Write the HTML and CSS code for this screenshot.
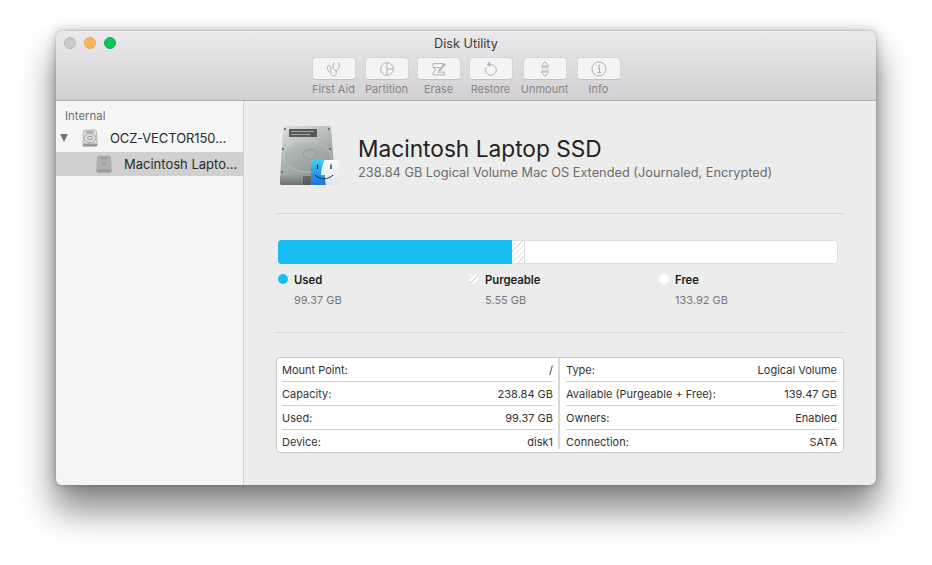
FILE: index.html
```html
<!DOCTYPE html>
<html lang="en">
<head>
<meta charset="utf-8">
<title>Disk Utility</title>
<link rel="stylesheet" href="styles.css">
</head>
<body>
<svg class="defs" width="0" height="0" aria-hidden="true">
  <defs>
    <linearGradient id="hddBody" x1="0.2" y1="0" x2="0.7" y2="1">
      <stop offset="0" stop-color="#d6dada"/><stop offset="0.55" stop-color="#a6adad"/><stop offset="1" stop-color="#858b8b"/>
    </linearGradient>
    <linearGradient id="hddPlate" x1="0" y1="0" x2="0.6" y2="1">
      <stop offset="0" stop-color="#bcc2c2"/><stop offset="1" stop-color="#959c9c"/>
    </linearGradient>
    <linearGradient id="hddFoot" x1="0" y1="0" x2="0" y2="1">
      <stop offset="0" stop-color="#9aa0a0"/><stop offset="1" stop-color="#6b7070"/>
    </linearGradient>
    <linearGradient id="finderBlue" x1="0" y1="0" x2="0" y2="1">
      <stop offset="0" stop-color="#3fcbf9"/><stop offset="1" stop-color="#1a72e0"/>
    </linearGradient>
    <linearGradient id="finderPale" x1="0" y1="0" x2="0" y2="1">
      <stop offset="0" stop-color="#f8fafb"/><stop offset="1" stop-color="#dfe7ec"/>
    </linearGradient>
    <symbol id="mini" viewBox="0 0 18 18">
      <path d="M3.500 1h11l1 1 .8 13v1.500l-1 1H2.700l-1-1V15l.8-13z" fill="currentColor" stroke="#a3a3a3" stroke-width=".7"/>
      <rect x="5" y="2.300" width="8" height="1.400" fill="#9a9a9a"/>
      <ellipse cx="9" cy="9" rx="5.800" ry="4.600" fill="none" stroke="#a4a4a4" stroke-width=".9"/>
      <ellipse cx="9" cy="9" rx="2.400" ry="1.700" fill="none" stroke="#979797" stroke-width=".9"/>
      <rect x="2.200" y="14.500" width="13.600" height="2.500" rx=".6" fill="#9b9b9b"/>
    </symbol>
  </defs>
</svg>
<main class="window">
  <header class="titlebar">
    <div class="lights">
      <span class="light grey"></span><span class="light amber"></span><span class="light green"></span>
    </div>
    <h1 class="title">Disk Utility</h1>
    <div class="tools">
      <div class="tool t1"><div class="btn"><svg viewBox="0 0 20 20"><path d="M10.500 3.500H9.500c-1 3-.5 6 1 7.500 1 1 2.700 1 3.700 0 1.500-1.500 2.300-4.500 1.300-7.500h-1.200M12.500 11.700V14c0 2.500-1.200 3.800-3 3.800s-3-1.300-3-3.300V8c0-1.300-.8-2-1.800-2s-2 .7-2 2c0 2.300.8 4.300 2 5.500" fill="none" stroke="#b0aeb0" stroke-width="1.100"/></svg></div><span>First Aid</span></div>
      <div class="tool t2"><div class="btn"><svg viewBox="0 0 20 20"><circle cx="10" cy="10" r="7" fill="none" stroke="#b0aeb0" stroke-width="1.100"/><path d="M10 3v14M10 10h7" fill="none" stroke="#b0aeb0" stroke-width="1.100"/></svg></div><span>Partition</span></div>
      <div class="tool t3"><div class="btn"><svg viewBox="0 0 20 20"><path d="M3.500 4h11v1.500M3.500 4v4.500h8M3.500 8.500l3 2.500-3 2.500v3h12.500v-3H8" fill="none" stroke="#b0aeb0" stroke-width="1.100"/><path d="M9.500 11l6.500-7.500 1.700 1.300-6.500 7.500-2.200.5z" fill="#b0aeb0"/></svg></div><span>Erase</span></div>
      <div class="tool t4"><div class="btn"><svg viewBox="0 0 20 20"><path d="M8.500 5.200a6 6 0 1 1-4 3.300" fill="none" stroke="#b0aeb0" stroke-width="1.100"/><path d="M9 1.800v6l-3.800-3z" fill="#b0aeb0"/></svg></div><span>Restore</span></div>
      <div class="tool t5"><div class="btn"><svg viewBox="0 0 20 20"><path d="M10 1.800l4 5h-8zM10 18.200l4-5h-8z" fill="none" stroke="#b0aeb0" stroke-width="1.100"/><path d="M6 8.600h8M6 11.400h8" stroke="#b0aeb0" stroke-width=".8"/></svg></div><span>Unmount</span></div>
      <div class="tool t6"><div class="btn"><svg viewBox="0 0 20 20"><circle cx="10" cy="10" r="7.800" fill="none" stroke="#b0aeb0" stroke-width="1.100"/><path d="M8.800 9h1.700v4.800M8.300 14h4" fill="none" stroke="#b0aeb0" stroke-width="1.200"/><circle cx="10" cy="6.400" r="1.100" fill="#b0aeb0"/></svg></div><span>Info</span></div>
    </div>
  </header>
  <div class="content">
    <aside class="sidebar">
      <div class="group">Internal</div>
      <div class="row disk"><span class="tri"></span><svg class="mini light-mini"><use href="#mini"/></svg><span>OCZ-VECTOR150...</span></div>
      <div class="row volume selected"><svg class="mini dark-mini"><use href="#mini"/></svg><span>Macintosh Lapto...</span></div>
    </aside>
    <section class="detail">
      <div class="head">
        <svg class="hdd" viewBox="0 0 60 60">
          <path d="M6 0h44a2 2 0 0 1 2 2l4 50v5a2 2 0 0 1-2 2H3a2 2 0 0 1-2-2v-5L4 2a2 2 0 0 1 2-2z" fill="url(#hddBody)"/>
          <ellipse cx="29" cy="31" rx="24" ry="15" fill="url(#hddPlate)" stroke="#c2c7c7" stroke-width=".7"/>
          <ellipse cx="31" cy="28" rx="7" ry="5" fill="#a7adad" stroke="#8c9292" stroke-width=".6"/>
          <rect x="10" y="3" width="28" height="8" rx=".5" fill="#565959"/>
          <path d="M12 5.500h23M12 8.500h19" stroke="#a5a8a8" stroke-width="1"/>
          <circle cx="6" cy="3" r="1.100" fill="#5f6363"/><circle cx="50" cy="3" r="1.100" fill="#5f6363"/>
          <circle cx="4" cy="23" r="1.100" fill="#5f6363"/><circle cx="51" cy="23" r="1.100" fill="#5f6363"/>
          <circle cx="3" cy="46" r="1.100" fill="#5f6363"/>
          <path d="M2 49h36v10H3a2 2 0 0 1-2-2v-5z" fill="url(#hddFoot)"/>
          <path d="M25 50v9M27 50v9M29 50v9M31 50v9" stroke="#3a3d3d" stroke-width="1"/>
          <rect x="32" y="34" width="28" height="25" rx="2.500" fill="url(#finderPale)"/>
          <path d="M34.500 34h11c-2 5-3.300 10-3.500 15 1.300.2 2.500.2 3.800.1.100 3.500.5 6.500 1 9.900h-12.300a2.500 2.500 0 0 1-2.500-2.500v-20a2.500 2.500 0 0 1 2.500-2.500z" fill="url(#finderBlue)"/>
          <path d="M38.500 38.500v4.500M52 38.500v4.500" stroke="#1d2b3d" stroke-width="1.300"/>
          <path d="M36 49c5 5 13 5 18 0" fill="none" stroke="#1d2b3d" stroke-width="1"/>
        </svg>
        <div class="head-text">
          <h2>Macintosh Laptop SSD</h2>
          <p>238.84 GB Logical Volume Mac OS Extended (Journaled, Encrypted)</p>
        </div>
      </div>
      <div class="usage">
        <div class="bar"><div class="used"></div><div class="purge"></div></div>
        <div class="legend">
          <div class="item i1"><span class="dot d-used"></span><div><b>Used</b><small>99.37 GB</small></div></div>
          <div class="item i2"><span class="dot d-purge"></span><div><b>Purgeable</b><small>5.55 GB</small></div></div>
          <div class="item i3"><span class="dot d-free"></span><div><b>Free</b><small>133.92 GB</small></div></div>
        </div>
      </div>
      <div class="info">
        <div class="col">
          <div class="kv"><span>Mount Point:</span><span>/</span></div>
          <div class="kv"><span>Capacity:</span><span>238.84 GB</span></div>
          <div class="kv"><span>Used:</span><span>99.37 GB</span></div>
          <div class="kv"><span>Device:</span><span>disk1</span></div>
        </div>
        <div class="col">
          <div class="kv"><span>Type:</span><span>Logical Volume</span></div>
          <div class="kv"><span>Available (Purgeable + Free):</span><span>139.47 GB</span></div>
          <div class="kv"><span>Owners:</span><span>Enabled</span></div>
          <div class="kv"><span>Connection:</span><span>SATA</span></div>
        </div>
      </div>
    </section>
  </div>
</main>
</body>
</html>
```

FILE: styles.css
```css
* { box-sizing: border-box; }
html, body { margin: 0; height: 100%; }
body {
  background: #fff;
  padding: 31px 56px 0;
  font-family: Inter, "Liberation Sans", sans-serif;
  overflow: hidden;
}
.defs { position: absolute; }
.window {
  width: 820px;
  height: 454px;
  border-radius: 6px;
  overflow: hidden;
  background: #ececec;
  box-shadow: 0 24px 34px 2px rgba(0,0,0,.46), 0 0 12px rgba(0,0,0,.28), 0 0 1px rgba(0,0,0,.5);
  display: flex;
  flex-direction: column;
}
.titlebar {
  height: 70px;
  flex: none;
  background: linear-gradient(#ebe9eb, #d2d0d2);
  border-bottom: 1px solid #b2b0b2;
  position: relative;
  display: flex;
  flex-direction: column;
  align-items: center;
}
.lights { position: absolute; left: 8px; top: 6px; display: flex; gap: 8px; }
.light { width: 12px; height: 12px; border-radius: 50%; }
.grey { background: #cbc9cb; border: 1px solid #b8b6b8; }
.amber { background: #f7b55c; border: 1px solid #e9a74f; }
.green { background: #0cc35c; border: 1px solid #10b354; }
.title { margin: 5px 0 0; font-size: 12.700px; font-weight: 400; line-height: 15px; color: #3b3b3b; }
.tools { display: flex; margin-top: 6px; }
.tool { display: flex; flex-direction: column; align-items: center; width: 44px; margin-left: 8px; }
.t1 { margin-left: 0; }
.t2 { margin-left: 9px; }
.t5, .t6 { margin-left: 10px; }
.btn {
  width: 44px; height: 23px;
  border-radius: 4px;
  background: #f5f4f5;
  border: 1px solid #d5d3d5;
  border-bottom-color: #c3c1c3;
  display: flex; align-items: center; justify-content: center;
}
.btn svg { width: 18px; height: 18px; }
.tool span { font-size: 11px; line-height: 14px; margin-top: 2px; color: #878587; white-space: nowrap; }
.content { flex: 1; display: flex; min-height: 0; }
.sidebar {
  width: 188px;
  flex: none;
  background: #f5f5f5;
  border-right: 1px solid #d2d2d2;
  padding-top: 9px;
  font-size: 13px;
  color: #2b2b2b;
}
.group { font-size: 11.400px; line-height: 13px; color: #6f6f6f; padding-left: 9px; margin-bottom: 3px; }
.row { height: 24px; display: flex; align-items: center; white-space: nowrap; }
.row span:last-child { line-height: 16px; }
.disk { padding-left: 4px; letter-spacing: -.07px; }
.tri { width: 0; height: 0; border-left: 4.500px solid transparent; border-right: 4.500px solid transparent; border-top: 8px solid #767676; margin-right: 13px; }
.mini { width: 18px; height: 18px; margin-right: 10px; flex: none; filter: blur(.25px); }
.light-mini { color: #dcdcdc; margin-right: 11px; }
.dark-mini { color: #b2b2b2; margin-right: 10px; margin-left: -1px; }
.volume { padding-left: 40px; margin-top: 2px; }
.volume span { margin-left: 1px; }
.selected { background: #d0d0d0; }
.detail { flex: 1; padding: 25px 32px 0; min-width: 0; }
.head {
  display: flex;
  height: 88px;
  align-items: flex-start;
  padding-left: 3px;
  border-bottom: 1px solid #d6d6d6;
}
.hdd { width: 60px; height: 60px; flex: none; margin-right: 19px; filter: blur(.35px); }
.head-text { padding-top: 9px; }
.head-text h2 { margin: 0; font-size: 22.700px; line-height: 28px; font-weight: 400; color: #222; }
.head-text p { margin: 2px 0 0; font-size: 12.780px; line-height: 16px; color: #6d6d6d; white-space: nowrap; }
.usage { height: 119px; padding: 26px 6px 0 2px; border-bottom: 1px solid #d6d6d6; }
.bar {
  height: 24px; width: 560px;
  background: #fff;
  box-shadow: inset 0 0 0 1px #dcdcdc;
  border-radius: 4px;
  overflow: hidden;
  display: flex;
}
.used { width: 234px; background: #16bdf3; }
.purge {
  width: 13px;
  border: 1px solid #dcdcdc;
  border-left: 0;
  background: repeating-linear-gradient(135deg, #fff 0 3px, #e2e2e2 3px 4px);
}
.legend { display: flex; margin-top: 9px; }
.item { display: flex; flex: none; width: 191px; }
.i2 { width: 190px; }
.dot { width: 10px; height: 10px; border-radius: 50%; margin: 1px 6px 0 0; flex: none; }
.d-used { background: #16bdf3; }
.d-free { background: #fff; }
.d-purge { background: repeating-linear-gradient(135deg, #fff 0 3px, #dcdcdc 3px 4px); }
.item b { display: block; font-size: 11.300px; line-height: 14px; font-weight: 600; color: #1c1c1c; }
.item small { display: block; font-size: 11px; line-height: 14px; margin-top: 6px; color: #767676; }
.info {
  margin-top: 24px;
  height: 96px;
  background: #fff;
  border: 1px solid #c9c9c9;
  border-radius: 4px;
  display: flex;
  padding: 0 6px 0 5px;
  font-size: 11px;
  color: #333;
}
.col { flex: 1; min-width: 0; height: 91px; }
.col:first-child { flex: none; width: 278px; padding-right: 5px; border-right: 2px solid #d9d9d9; }
.col:last-child { padding-left: 6px; }
.kv {
  height: 24px;
  flex: none;
  display: flex;
  justify-content: space-between;
  align-items: center;
  border-bottom: 1px solid #cfcfcf;
  white-space: nowrap;
}
.kv:last-child { border-bottom: 0; }
```
